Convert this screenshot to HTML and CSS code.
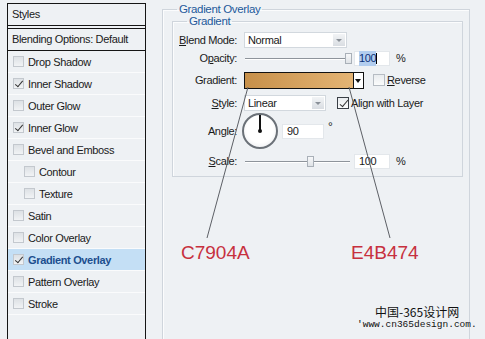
FILE: index.html
```html
<!DOCTYPE html>
<html lang="en">
<head>
    <meta charset="UTF-8">
    <title>Layer Style - Gradient Overlay</title>
    <link rel="stylesheet" href="styles.css">
</head>
<body>

<div class="dialog">
    <div class="styles-panel">
        <div class="panel-head">Styles</div>
        <div class="panel-blend">Blending Options: Default</div>
        <ul class="style-list">
            <li><span class="cb"></span>Drop Shadow</li>
            <li><span class="cb checked"></span>Inner Shadow</li>
            <li><span class="cb"></span>Outer Glow</li>
            <li><span class="cb checked"></span>Inner Glow</li>
            <li><span class="cb"></span>Bevel and Emboss</li>
            <li class="sub"><span class="cb"></span>Contour</li>
            <li class="sub"><span class="cb"></span>Texture</li>
            <li><span class="cb"></span>Satin</li>
            <li><span class="cb"></span>Color Overlay</li>
            <li class="active"><span class="cb checked"></span>Gradient Overlay</li>
            <li><span class="cb"></span>Pattern Overlay</li>
            <li><span class="cb"></span>Stroke</li>
        </ul>
    </div>

    <fieldset class="group outer">
        <legend>Gradient Overlay</legend>
        <fieldset class="group inner">
            <legend>Gradient</legend>

            <div class="row">
                <label class="lbl"><u>B</u>lend Mode:</label>
                <div class="select blend-select"><span>Normal</span><i class="arrow"></i></div>
            </div>

            <div class="row">
                <label class="lbl">O<u>p</u>acity:</label>
                <div class="slider"><span class="thumb" style="left: 100%"></span></div>
                <div class="field num"><span class="sel">100</span><span class="caret"></span></div>
                <span class="unit">%</span>
            </div>

            <div class="row row-gradient">
                <label class="lbl">Gradient:</label>
                <div class="swatch"></div>
                <div class="swatch-btn"></div>
                <span class="check box-reverse"></span>
                <span class="opt"><u>R</u>everse</span>
            </div>

            <div class="row row-style">
                <label class="lbl"><u>S</u>tyle:</label>
                <div class="select style-select"><span>Linear</span><i class="arrow"></i></div>
                <span class="check on box-align"></span>
                <span class="opt">Align with Layer</span>
            </div>

            <div class="row row-angle">
                <label class="lbl">An<u>g</u>le:</label>
                <div class="dial"></div>
                <div class="field angle-field">90</div>
                <span class="deg">°</span>
            </div>

            <div class="row row-scale">
                <label class="lbl"><u>S</u>cale:</label>
                <div class="slider"><span class="thumb" style="left: 64%"></span></div>
                <div class="field num">100</div>
                <span class="unit">%</span>
            </div>
        </fieldset>
    </fieldset>
</div>

<svg class="callouts" width="485" height="339" viewBox="0 0 485 339">
    <line x1="248" y1="87" x2="207" y2="238"/>
    <line x1="349" y1="87" x2="390" y2="238"/>
</svg>
<div class="note note-left">C7904A</div>
<div class="note note-right">E4B474</div>

<div class="stamp">
    <div class="stamp-cn">中国-365设计网</div>
    <div class="stamp-url">'www.cn365design.com.</div>
</div>

</body>
</html>
```

FILE: styles.css
```css
body {
    margin: 0;
    width: 485px;
    height: 339px;
    overflow: hidden;
    background-color: #eef1f4;
    font-family: "Liberation Sans", Arial, sans-serif;
    font-size: 11px;
    letter-spacing: -0.35px;
    color: #1a1a1a;
    position: relative;
}

.dialog {
    display: flex;
    align-items: flex-start;
}

/* linker lijst met stijlen */
.styles-panel {
    width: 137px;
    height: 336px;
    margin: 3px 16px 0 7px;
    border: 1px solid #151515;
    border-bottom: none;
    background-color: #eef1f4;
}

.panel-head {
    height: 21px;
    line-height: 21px;
    padding-left: 4px;
    border-bottom: 1px solid #151515;
}

.panel-blend {
    height: 21px;
    line-height: 21px;
    padding-left: 4px;
    margin-top: 2px;
    border-top: 1px solid #151515;
    border-bottom: 1px solid #151515;
}

.style-list {
    list-style: none;
    margin: 0;
    padding: 0;
}

.style-list li {
    display: flex;
    align-items: center;
    height: 21px;
    border-bottom: 1px solid #fafbfc;
    padding-left: 5px;
}

.style-list li.sub {
    padding-left: 16px;
}

.style-list li.active {
    background-color: #c4dff5;
    color: #1c4e8e;
    font-weight: bold;
}

.cb {
    position: relative;
    width: 9px;
    height: 9px;
    margin-right: 4px;
    border: 1px solid #c3c8ce;
    background: linear-gradient(#dde1e5, #f1f3f5);
}

.cb.checked::after,
.check.on::after {
    content: "";
    position: absolute;
    left: 3px;
    top: 0;
    width: 3px;
    height: 7px;
    border-right: 1.5px solid #333;
    border-bottom: 1.5px solid #333;
    transform: rotate(40deg);
}

/* rechter deel */
.group {
    margin: 0;
    border: 1px solid #cfd5dc;
    box-shadow: inset 1px 1px 0 #fbfcfd;
}

.group legend {
    padding: 0 2px;
    line-height: 12px;
    color: #23599b;
    font-size: 11.5px;
}

.outer {
    width: 308px;
    height: 336px;
    margin-top: 3px;
    padding: 0 0 0 9px;
    border-bottom: none;
    box-sizing: border-box;
}

.outer legend {
    margin-left: 5px;
}

.inner {
    width: 289px;
    padding: 4px 0 6px 0;
}

.inner legend {
    margin-left: 14px;
}

.row {
    display: flex;
    align-items: center;
    height: 18px;
}

.row-gradient { margin-top: 4px; }
.row-style { margin-top: 5px; }
.row-angle { margin-top: 1px; height: 36px; }
.row-scale { margin-top: 3px; }

.lbl {
    width: 64px;
    margin-right: 7px;
    text-align: right;
    flex-shrink: 0;
}

.select {
    position: relative;
    height: 14px;
    border: 1px solid #d2d8de;
    background-color: #fff;
    display: flex;
    align-items: center;
    padding-left: 3px;
}

.blend-select { width: 98px; }
.style-select { width: 77px; }

.select .arrow {
    position: absolute;
    right: 1px;
    top: 1px;
    width: 12px;
    height: 12px;
    background: linear-gradient(#f2f4f6, #d9dde2);
}

.select .arrow::after {
    content: "";
    position: absolute;
    left: 3px;
    top: 5px;
    border-left: 3px solid transparent;
    border-right: 3px solid transparent;
    border-top: 3px solid #8a9098;
}

.slider {
    position: relative;
    width: 106px;
    height: 18px;
    flex-shrink: 0;
}

.slider::before {
    content: "";
    position: absolute;
    left: 1px;
    right: 0;
    top: 9px;
    height: 1px;
    background-color: #8e949b;
    border-bottom: 1px solid #fff;
}

.thumb {
    position: absolute;
    top: 4px;
    width: 5px;
    height: 9px;
    margin-left: -5px;
    border: 1px solid #a9b0b8;
    background: linear-gradient(#f7f8f9, #dfe3e7);
}

.field {
    height: 15px;
    line-height: 15px;
    background-color: #fff;
    border: 1px solid #e3e7eb;
    box-sizing: border-box;
    padding-left: 4px;
    display: flex;
    align-items: center;
}

.num {
    width: 36px;
    margin-left: 4px;
}

.sel {
    background-color: #b2cdef;
    color: #0b2f78;
}

.caret {
    width: 1px;
    height: 11px;
    background-color: #000;
}

.unit {
    margin-left: 6px;
}

.swatch {
    width: 108px;
    height: 15px;
    border: 1px solid #111;
    background: linear-gradient(to right, #c7904a, #e4b474);
}

.swatch-btn {
    position: relative;
    width: 9px;
    height: 15px;
    border: 1px solid #111;
    border-left: none;
    background-color: #fff;
}

.swatch-btn::after {
    content: "";
    position: absolute;
    left: 1px;
    top: 6px;
    border-left: 3.5px solid transparent;
    border-right: 3.5px solid transparent;
    border-top: 4px solid #111;
}

.check {
    position: relative;
    width: 10px;
    height: 10px;
    border: 1px solid #8d939a;
    background: linear-gradient(#e9ecef, #fbfcfc);
    flex-shrink: 0;
}

.check.on {
    border-color: #3a3f46;
}

.check.on::after {
    left: 4px;
    top: 0;
    height: 8px;
}

.box-reverse {
    margin-left: 9px;
    border-color: #b6bcc3;
}

.box-align {
    margin-left: 11px;
}

.opt {
    margin-left: 2px;
}

.dial {
    position: relative;
    width: 32px;
    height: 32px;
    margin-left: -2px;
    border: 2px solid #6b7178;
    border-radius: 50%;
    background: radial-gradient(circle at 50% 45%, #ffffff 55%, #e3e6ea);
}

.dial::before {
    content: "";
    position: absolute;
    left: 15px;
    top: 0;
    width: 1.5px;
    height: 16px;
    background-color: #111;
}

.dial::after {
    content: "";
    position: absolute;
    left: 14px;
    top: 14px;
    width: 4px;
    height: 4px;
    border-radius: 50%;
    background-color: #111;
}

.angle-field {
    width: 42px;
    margin-left: 4px;
}

.deg {
    margin-left: 4px;
    align-self: flex-start;
    margin-top: 7px;
    font-size: 12px;
}

/* aantekeningen over het venster */
.callouts {
    position: absolute;
    left: 0;
    top: 0;
    pointer-events: none;
}

.callouts line {
    stroke: #5d6066;
    stroke-width: 1;
}

.note {
    position: absolute;
    top: 243px;
    font-size: 19px;
    line-height: 20px;
    letter-spacing: 0;
    color: #c7303e;
}

.note-left { left: 181px; }
.note-right { left: 351px; }

.stamp {
    position: absolute;
    left: 357px;
    top: 304px;
    width: 122px;
    letter-spacing: 0;
}

.stamp-cn {
    font-family: "Noto Sans CJK SC", sans-serif;
    font-size: 12px;
    line-height: 15px;
    padding-left: 18px;
    color: #111;
}

.stamp-url {
    font-family: "Liberation Mono", monospace;
    font-size: 9.5px;
    line-height: 12px;
    color: #111;
}
```
